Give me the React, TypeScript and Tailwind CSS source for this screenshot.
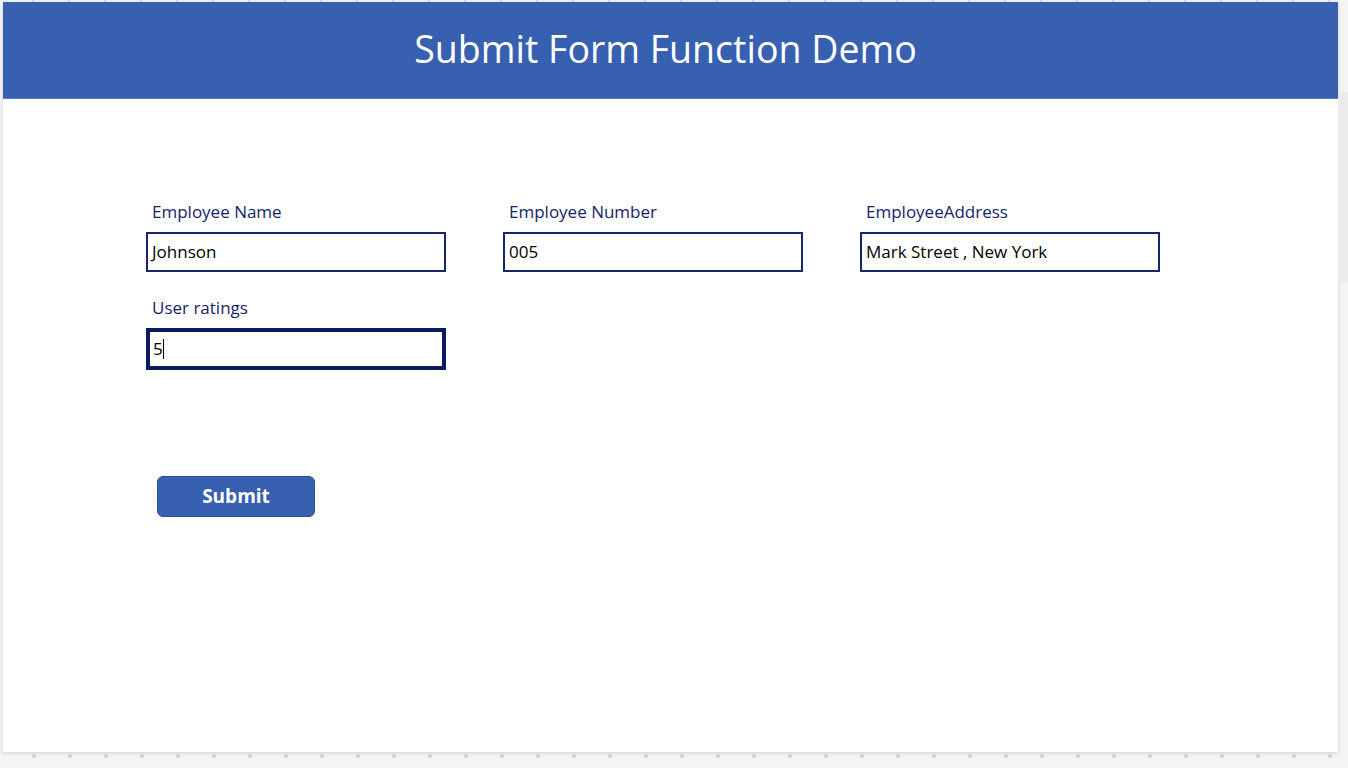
const font = { fontFamily: '"Open Sans", "Noto Sans", sans-serif' };

function Field({ label, value, focused }: { label: string; value: string; focused?: boolean }) {
  return (
    <div className="flex flex-col w-[300px]">
      <div className="h-[31px] pl-[6px] text-[17px] leading-[22px] text-[#14246b]">{label}</div>
      {focused ? (
        <div className="h-[42px] border-[4px] border-[#0c1a5e] bg-white pl-[3px] flex items-center text-[17px] text-black">
          <span>{value}</span>
          <span className="w-px h-[20px] bg-black" />
        </div>
      ) : (
        <div className="h-[40px] border-2 border-[#17276b] bg-white pl-[4px] flex items-center text-[17px] text-black">
          {value}
        </div>
      )}
    </div>
  );
}

export default function App() {
  const dots = Array.from({ length: 37 });
  return (
    <div className="w-[1348px] h-[768px] overflow-hidden bg-[#f4f4f4] relative" style={font}>
      <div className="h-[2px] flex pl-[32px] gap-[34px]">
        {dots.map((_, i) => (
          <span key={i} className="w-[2px] h-[2px] rounded-full bg-[#d0d0d0]" />
        ))}
      </div>
      <div className="flex">
        <div className="ml-[3px] w-[1335px] h-[750px] bg-white shadow-[0_1px_4px_rgba(0,0,0,0.15)] flex flex-col">
          <div className="h-[97px] bg-[#3760b1] flex items-center justify-center border-b border-[#5a7dc4]">
            <h1 className="text-[37.5px] text-white leading-none pb-[2px] pr-[10px]">Submit Form Function Demo</h1>
          </div>
          <div className="pl-[143px] pt-[102px] flex flex-col">
            <div className="flex gap-[57px]">
              <Field label="Employee Name" value="Johnson" />
              <Field label="Employee Number" value="005" />
              <Field label="EmployeeAddress" value="Mark Street , New York" />
            </div>
            <div className="mt-[25px]">
              <Field label="User ratings" value="5" focused />
            </div>
            <button className="mt-[106px] ml-[11px] w-[158px] h-[41px] rounded-[6px] bg-[#3760b1] border border-[#2c4f9a] text-white font-bold text-[19px] leading-none pb-[1px]">
              Submit
            </button>
          </div>
        </div>
        <div className="flex-1 flex flex-col pt-[90px]">
          <div className="h-[190px] bg-[#ebebeb]" />
        </div>
      </div>
      <div className="mt-[2px] flex pl-[32px] gap-[32px]">
        {dots.map((_, i) => (
          <span key={i} className="w-[4px] h-[4px] rounded-full bg-[#cfcfcf]" />
        ))}
      </div>
    </div>
  );
}
